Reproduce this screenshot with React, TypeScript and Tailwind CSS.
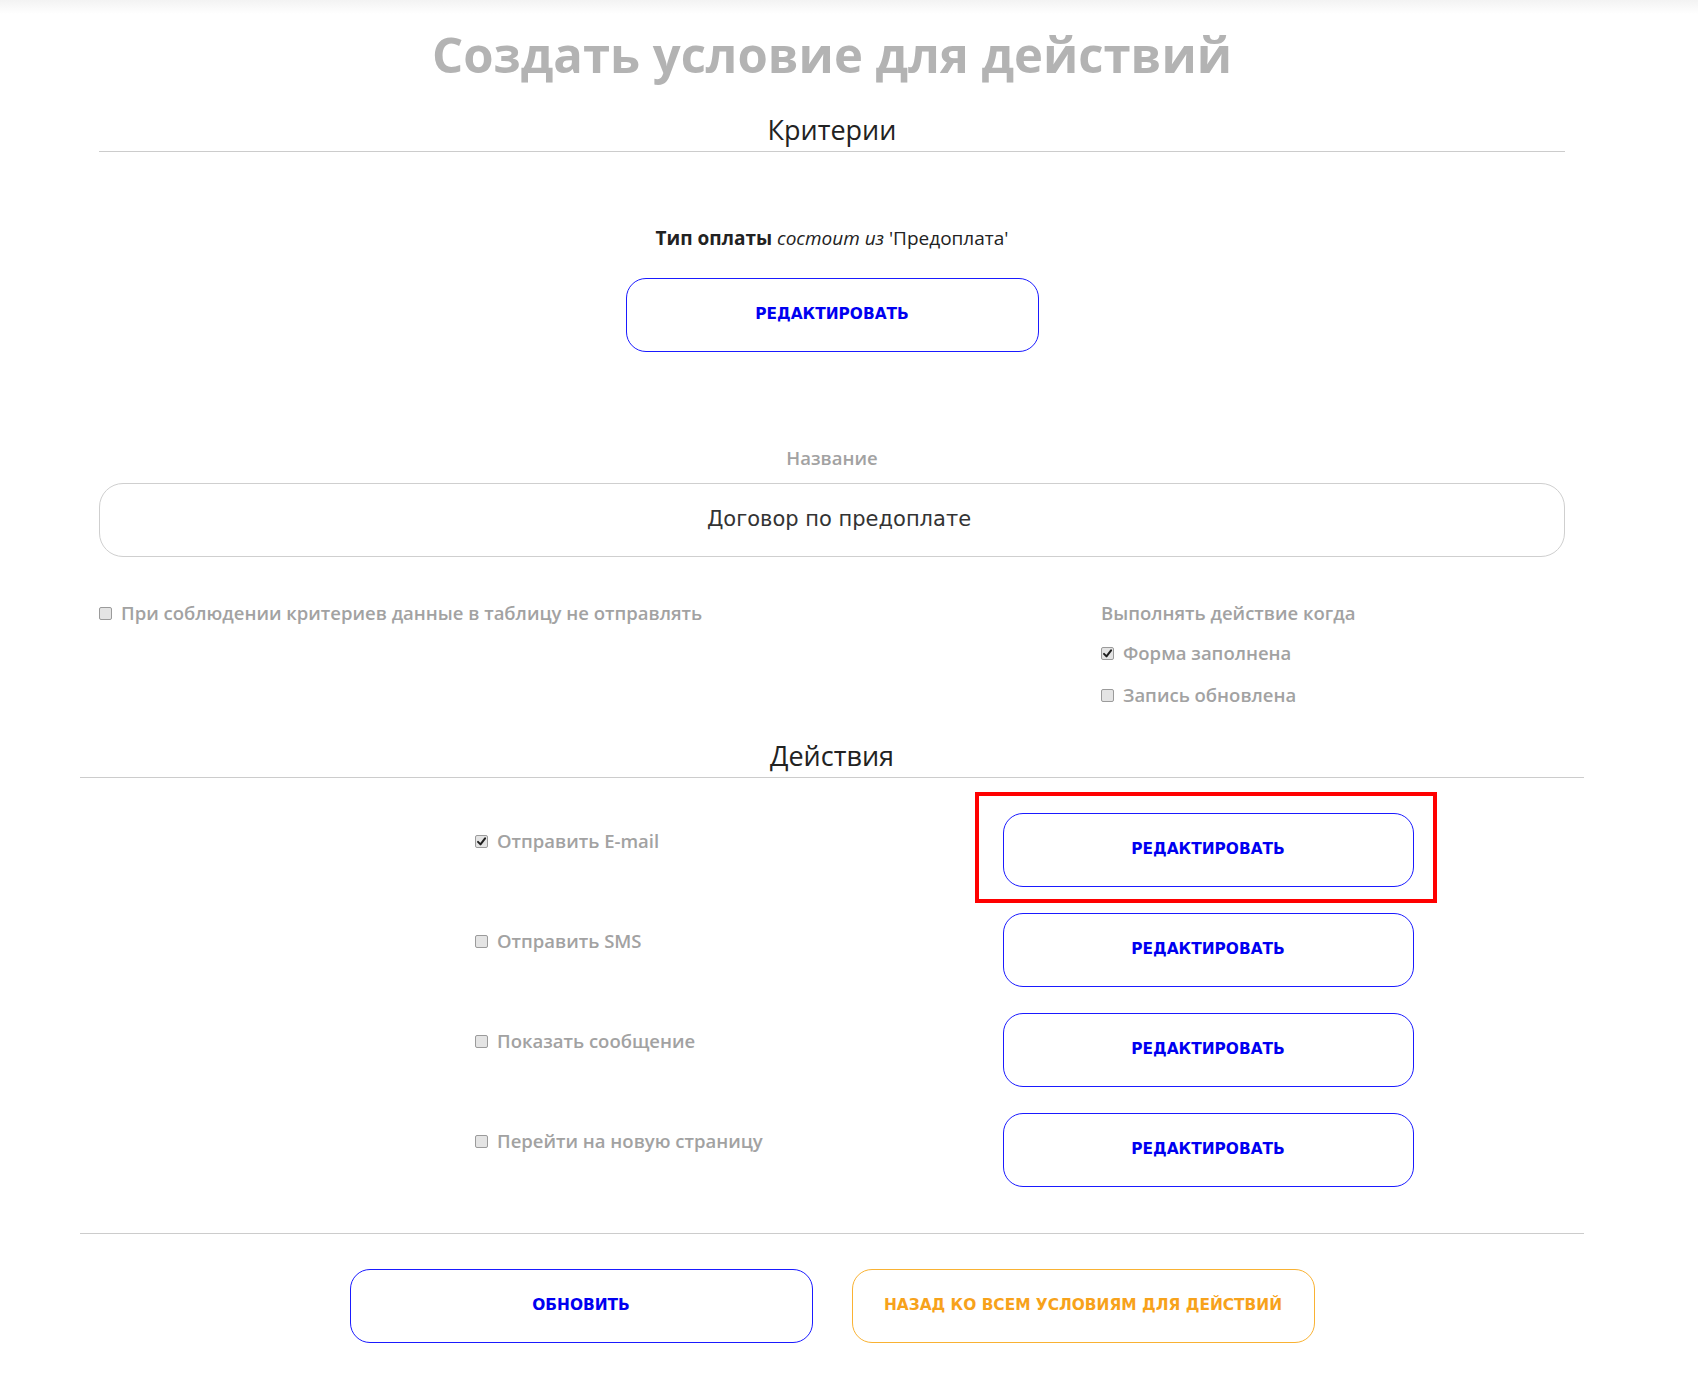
import React from "react";
import clsx from "clsx";

type BoxProps = {
  checked?: boolean;
};

const CheckBox = ({ checked }: BoxProps) => (
  <span className="inline-flex h-[13px] w-[13px] shrink-0 items-center justify-center rounded-[2px] border border-[#9b9b9b] bg-[#e4e4e4]">
    {checked && (
      <svg width="11" height="11" viewBox="0 0 12 12" fill="none">
        <path d="M2.2 6.4 L4.9 9.1 L9.9 2.6" stroke="#1f1f1f" strokeWidth="2.2" strokeLinecap="round" strokeLinejoin="round" />
      </svg>
    )}
  </span>
);

const CheckLabel = ({ checked, children }: { checked?: boolean; children: React.ReactNode }) => (
  <label className="flex items-center gap-[9px] text-[18.5px] font-semibold leading-[26px] text-[#a2a2a2]">
    <CheckBox checked={checked} />
    <span>{children}</span>
  </label>
);

type ButtonProps = {
  children: React.ReactNode;
  className?: string;
  orange?: boolean;
};

const OutlineButton = ({ children, className, orange }: ButtonProps) => (
  <button
    className={clsx(
      "flex h-[74px] items-center justify-center rounded-[20px] border bg-white font-['DejaVu_Sans',sans-serif] text-[15.4px] font-bold uppercase",
      orange ? "border-[#f9b233] text-[#f7a21b]" : "border-[#1a1aff] text-[#0000f0]",
      className
    )}
  >
    {children}
  </button>
);

const actions = [
  { label: "Отправить E-mail", checked: true, marked: true },
  { label: "Отправить SMS", checked: false, marked: false },
  { label: "Показать сообщение", checked: false, marked: false },
  { label: "Перейти на новую страницу", checked: false, marked: false },
];

export default function App() {
  return (
    <div className="min-h-screen w-full bg-white font-['Open_Sans',sans-serif]">
      <div className="h-[14px] bg-gradient-to-b from-[#f3f3f3] to-white" />

      <div className="ml-[80px] w-[1504px]">
        <h1 className="mt-[12px] text-center text-[49px] font-bold leading-[56px] text-[#b3b3b3]">
          Создать условие для действий
        </h1>

        {/* Критерии */}
        <div className="px-[19px]">
          <h2 className="mt-[30px] text-center text-[27px] leading-[36px] text-[#222]">Критерии</h2>
          <div className="mt-[3px] h-px bg-[#cccccc]" />

          <p className="mt-[72px] text-center text-[19px] leading-[28px] text-[#222]">
            <span className="font-bold">Тип оплаты</span> <em>состоит из</em> 'Предоплата'
          </p>
          <div className="mt-[26px] flex justify-center">
            <OutlineButton className="w-[413px]">Редактировать</OutlineButton>
          </div>

          <p className="mt-[93px] text-center text-[18.5px] font-semibold leading-[26px] text-[#a2a2a2]">Название</p>
          <div className="mt-[12px] flex h-[74px] items-center justify-center rounded-[24px] border border-[#cfcfcf] pl-[14px] font-['DejaVu_Sans',sans-serif] text-[21px] text-[#333]">
            Договор по предоплате
          </div>

          <div className="mt-[43px] flex">
            <div className="w-[1002px]">
              <CheckLabel>При соблюдении критериев данные в таблицу не отправлять</CheckLabel>
            </div>
            <div className="flex flex-col">
              <p className="text-[18.5px] font-semibold leading-[26px] text-[#a2a2a2]">Выполнять действие когда</p>
              <div className="mt-[14px]">
                <CheckLabel checked>Форма заполнена</CheckLabel>
              </div>
              <div className="mt-[16px]">
                <CheckLabel>Запись обновлена</CheckLabel>
              </div>
            </div>
          </div>
        </div>

        {/* Действия */}
        <h2 className="mt-[30px] text-center text-[27px] leading-[36px] text-[#222]">Действия</h2>
        <div className="mt-[3px] h-px bg-[#cccccc]" />

        <div className="mt-[35px] flex flex-col gap-[26px]">
          {actions.map((a) => (
            <div key={a.label} className="flex">
              <div className="w-[752px] pl-[395px] pt-[15px]">
                <CheckLabel checked={a.checked}>{a.label}</CheckLabel>
              </div>
              <div className="flex w-[752px] justify-center">
                <div className="relative">
                  <OutlineButton className="w-[411px]">Редактировать</OutlineButton>
                  {a.marked && (
                    <div className="pointer-events-none absolute -left-[28px] -top-[21px] h-[111px] w-[462px] border-4 border-[#ff0000]" />
                  )}
                </div>
              </div>
            </div>
          ))}
        </div>

        <div className="mt-[46px] h-px bg-[#cccccc]" />

        <div className="mt-[35px] flex justify-center gap-[39px] pb-[30px]">
          <OutlineButton className="w-[463px]">Обновить</OutlineButton>
          <OutlineButton orange className="w-[463px]">
            Назад ко всем условиям для действий
          </OutlineButton>
        </div>
      </div>
    </div>
  );
}
